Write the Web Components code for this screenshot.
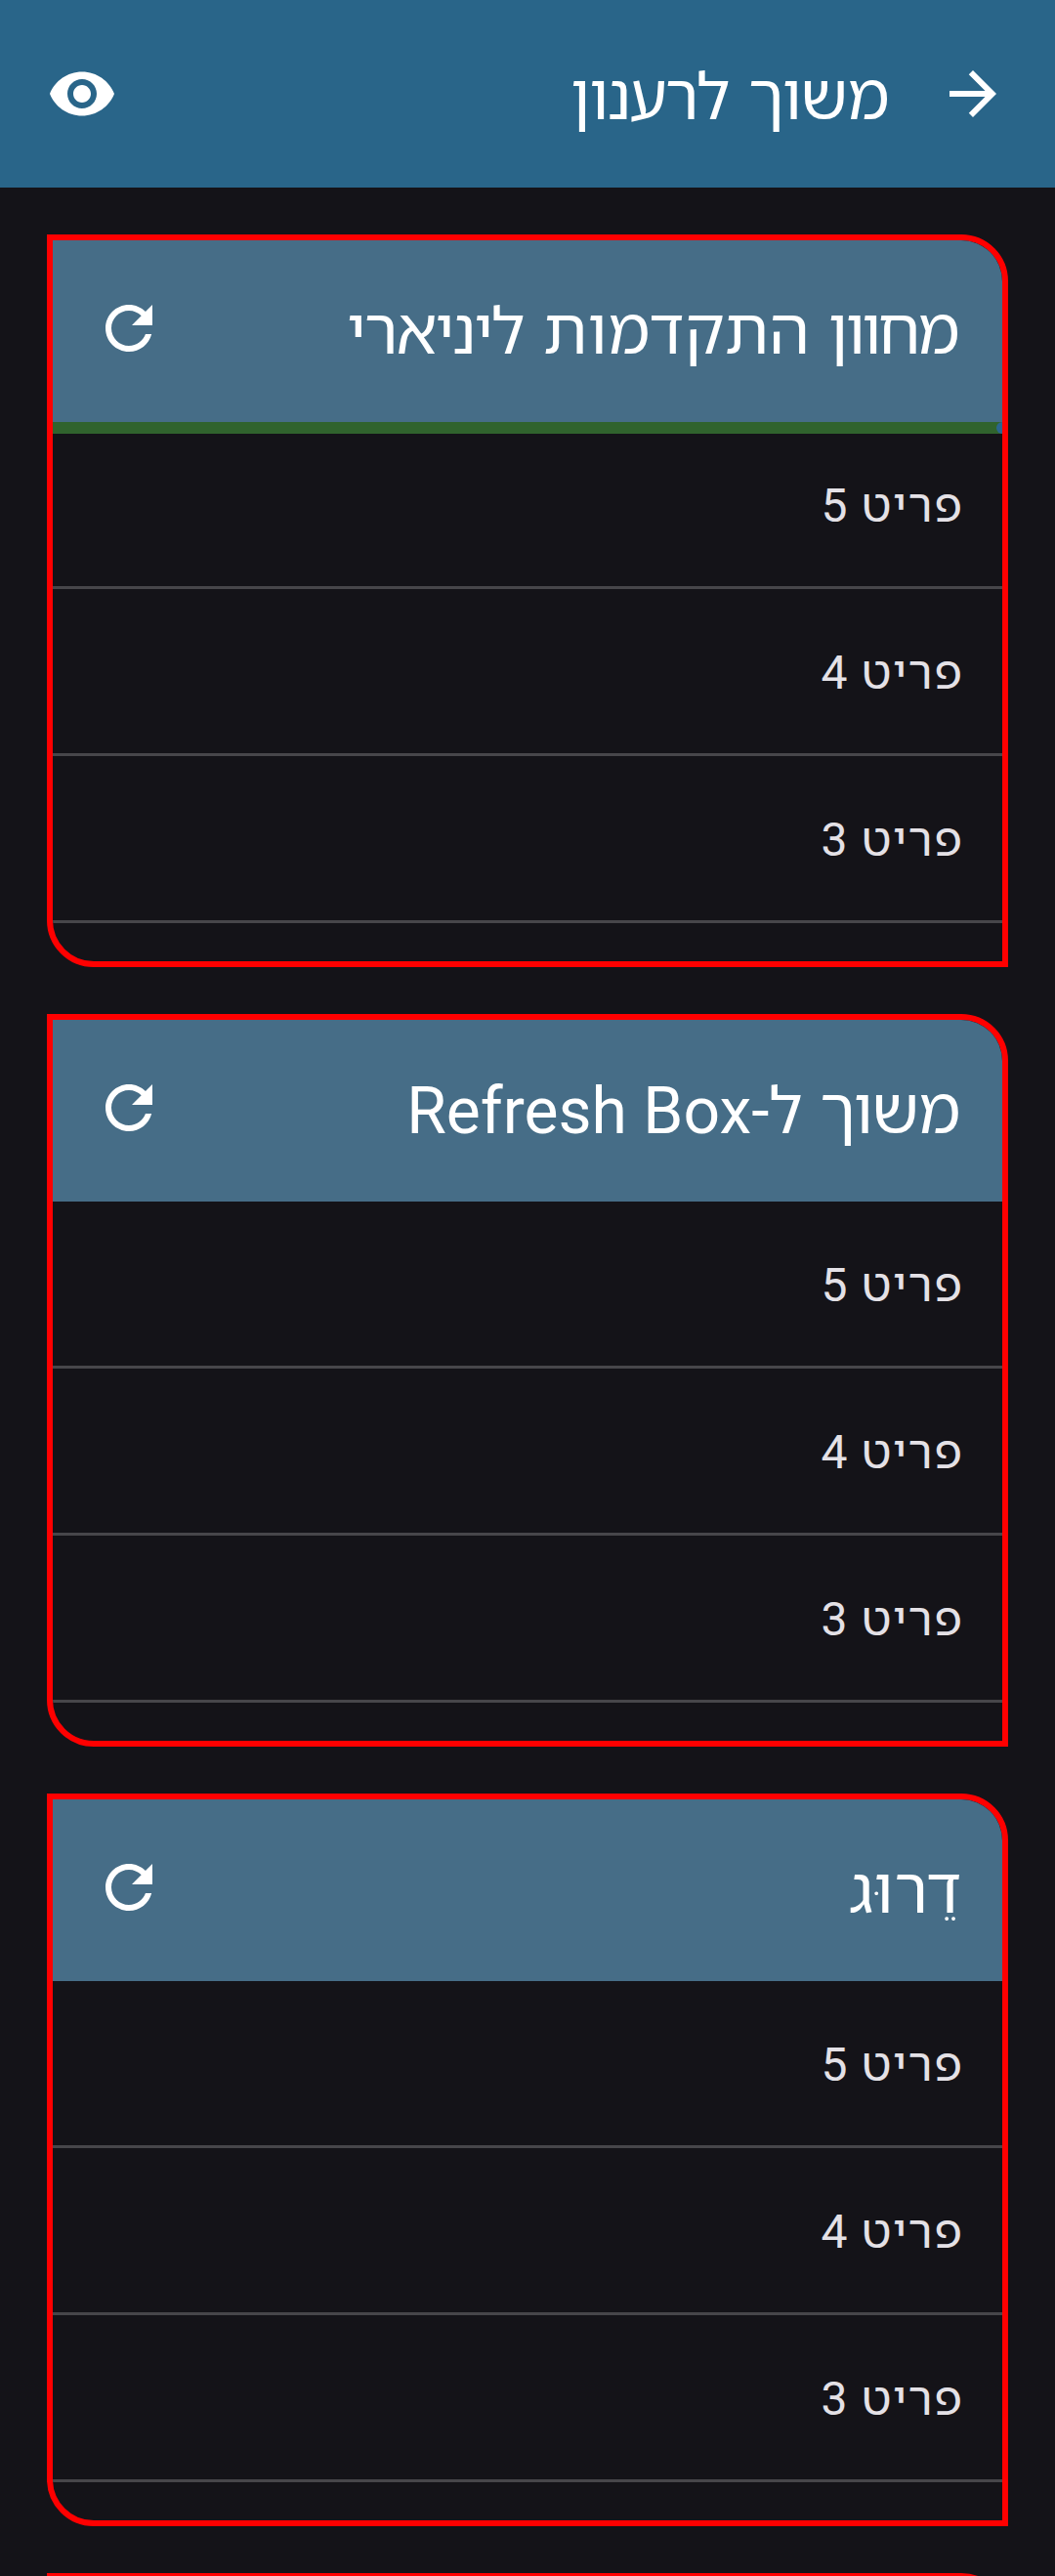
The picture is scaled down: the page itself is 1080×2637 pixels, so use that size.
<!DOCTYPE html>
<html lang="he" dir="rtl">
<head>
<meta charset="utf-8">
<title>משוך לרענון</title>
<style>
html,body{margin:0;background:#141318}
body{height:2637px;overflow:hidden;font-family:Roboto,"Noto Sans Hebrew","Open Sans",sans-serif;color:#e4e1e6}
</style>
</head>
<body>
<refresh-page></refresh-page>
<script>
const PATHS = {
  forward: 'M12 4l-1.41 1.41L16.17 11H4v2h12.17l-5.58 5.59L12 20l8-8z',
  eye: 'M12 4.5C7 4.5 2.73 7.61 1 12c1.73 4.39 6 7.5 11 7.5s9.27-3.11 11-7.5c-1.73-4.39-6-7.5-11-7.5zM12 17c-2.76 0-5-2.24-5-5s2.24-5 5-5 5 2.24 5 5-2.24 5-5 5zm0-8c-1.66 0-3 1.34-3 3s1.34 3 3 3 3-1.34 3-3-1.34-3-3-3z',
  refresh: 'M17.65 6.35C16.2 4.9 14.21 4 12 4c-4.42 0-7.99 3.58-7.99 8s3.57 8 7.99 8c3.73 0 6.84-2.55 7.73-6h-2.08c-.82 2.33-3.04 4-5.65 4-3.31 0-6-2.69-6-6s2.69-6 6-6c1.66 0 3.14.69 4.22 1.78L13 11h7V4l-2.35 2.35z'
};
customElements.define('md-icon', class extends HTMLElement {
  connectedCallback() {
    this.attachShadow({mode: 'open'}).innerHTML = `
      <style>:host{display:block;width:72px;height:72px;flex:none;color:#fff}svg{display:block;width:100%;height:100%}</style>
      <svg viewBox="0 0 24 24" fill="currentColor"><path d="${PATHS[this.getAttribute('name')]}"/></svg>`;
  }
});
customElements.define('top-bar', class extends HTMLElement {
  connectedCallback() {
    this.attachShadow({mode: 'open'}).innerHTML = `
      <style>
        :host{display:flex;align-items:center;box-sizing:border-box;height:192px;padding:0 48px;background:var(--bar,#296589)}
        .title{flex:1;padding-top:7px;font-size:66px;line-height:84px;color:#fff;white-space:nowrap}
        slot[name=nav]::slotted(*){margin-inline-end:48px}
      </style>
      <slot name="nav"></slot><div class="title"><slot></slot></div><slot name="action"></slot>`;
  }
});
customElements.define('list-row', class extends HTMLElement {
  connectedCallback() {
    this.attachShadow({mode: 'open'}).innerHTML = `
      <style>
        :host{display:flex;align-items:center;box-sizing:border-box;height:171px;padding:4px 39.5px 0;border-bottom:3px solid #47464a;font-size:48px;line-height:72px;letter-spacing:1.5px}
      </style>
      <div><slot></slot></div>`;
  }
});
customElements.define('linear-progress', class extends HTMLElement {
  connectedCallback() {
    this.attachShadow({mode: 'open'}).innerHTML = `
      <style>
        :host{display:flex;height:12px;margin-bottom:-12px;position:relative;background:#30632d;overflow:hidden}
        i{width:6px;height:12px;border-top-left-radius:6px;border-bottom-left-radius:6px;background:#2b658f}
      </style><i></i>`;
  }
});
/* One word of a title; "track" is its letter spacing, "lead" and "trail" its side margins, in px. */
customElements.define('title-word', class extends HTMLElement {
  connectedCallback() {
    const px = name => (this.getAttribute(name) || 0) + 'px';
    this.attachShadow({mode: 'open'}).innerHTML = `
      <style>:host{display:inline;letter-spacing:${px('track')};margin-inline:${px('lead')} ${px('trail')}}</style><slot></slot>`;
  }
});
customElements.define('refresh-card', class extends HTMLElement {
  connectedCallback() {
    this.attachShadow({mode: 'open'}).innerHTML = `
      <style>
        :host{display:block;box-sizing:border-box;height:750px;flex:none;border:6px solid #f00;border-radius:0 48px 0 48px;overflow:hidden}
        top-bar{--bar:#466d87;margin:-6px -6px 0}
      </style>
      <top-bar><slot name="heading"></slot><md-icon slot="action" name="refresh"></md-icon></top-bar>
      <slot></slot>`;
  }
});
customElements.define('refresh-page', class extends HTMLElement {
  connectedCallback() {
    const rows = [5, 4, 3].map(n => `<list-row>פריט ${n}</list-row>`).join('');
    this.attachShadow({mode: 'open'}).innerHTML = `
      <style>
        :host{display:flex;flex-direction:column;height:2637px;overflow:hidden}
        top-bar{flex:none}
        main{display:flex;flex-direction:column;gap:48px;padding:48px}
      </style>
      <top-bar><md-icon slot="nav" name="forward"></md-icon><title-word track="-1" lead="2.5" trail="4">משוך</title-word> <title-word track="-2.2">לרענון</title-word><md-icon slot="action" name="eye"></md-icon></top-bar>
      <main>
        <refresh-card><span slot="heading"><title-word track="-3.5" lead="5" trail="2.5">מחוון</title-word> <title-word track="0.15" trail="4">התקדמות</title-word> <title-word track="-1.8">ליניארי</title-word></span><linear-progress></linear-progress>${rows}</refresh-card>
        <refresh-card><span slot="heading"><title-word track="-1.2" lead="2" trail="1">משוך</title-word> ל-Refresh Box</span>${rows}</refresh-card>
        <refresh-card><span slot="heading"><title-word track="0.85" lead="-1">דֵרוּג</title-word></span>${rows}</refresh-card>
        <refresh-card></refresh-card>
      </main>`;
  }
});
</script>
</body>
</html>
